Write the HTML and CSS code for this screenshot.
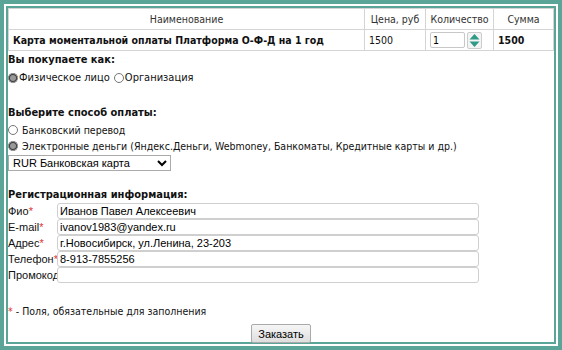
FILE: index.html
```html
<!DOCTYPE html>
<html lang="ru">
<head>
    <meta charset="UTF-8">
    <meta name="viewport" content="width=device-width, initial-scale=1.0">
    <link rel="stylesheet" href="styles.css">
    <title>Оформление заказа</title>
</head>
<body>
    <div class="frame">
        <div class="page">
            <table class="cart">
                <tr>
                    <th class="col-name">Наименование</th>
                    <th class="col-price">Цена, руб</th>
                    <th class="col-qty">Количество</th>
                    <th class="col-sum">Сумма</th>
                </tr>
                <tr>
                    <td class="item-name">Карта моментальной оплаты Платформа О-Ф-Д на 1 год</td>
                    <td>1500</td>
                    <td>
                        <div class="qty">
                            <input type="text" class="qty-input" value="1">
                            <span class="spinner">
                                <svg width="13" height="15" viewBox="0 0 13 15">
                                    <path d="M6.5 1 L11.5 6.5 L1.5 6.5 Z" fill="#2f9a86"/>
                                    <path d="M1.5 8.5 L11.5 8.5 L6.5 14 Z" fill="#2f9a86"/>
                                </svg>
                            </span>
                        </div>
                    </td>
                    <td class="item-sum">1500</td>
                </tr>
            </table>

            <form class="order">
                <h4 class="section-title">Вы покупаете как:</h4>
                <div class="buyer-type">
                    <label><input type="radio" name="buyer" checked>Физическое лицо</label>
                    <label><input type="radio" name="buyer">Организация</label>
                </div>

                <h4 class="section-title pay-title">Выберите способ оплаты:</h4>
                <label class="pay-option"><input type="radio" name="pay">Банковский перевод</label>
                <label class="pay-option"><input type="radio" name="pay" checked>Электронные деньги (Яндекс.Деньги, Webmoney, Банкоматы, Кредитные карты и др.)</label>
                <select class="pay-select">
                    <option>RUR Банковская карта</option>
                </select>

                <h4 class="section-title reg-title">Регистрационная информация:</h4>
                <div class="reg">
                    <div class="reg-row">
                        <span class="reg-label">Фио<i>*</i></span>
                        <input type="text" value="Иванов Павел Алексеевич">
                    </div>
                    <div class="reg-row">
                        <span class="reg-label">E-mail<i>*</i></span>
                        <input type="text" value="ivanov1983@yandex.ru">
                    </div>
                    <div class="reg-row">
                        <span class="reg-label">Адрес<i>*</i></span>
                        <input type="text" value="г.Новосибирск, ул.Ленина, 23-203">
                    </div>
                    <div class="reg-row">
                        <span class="reg-label">Телефон<i>*</i></span>
                        <input type="text" value="8-913-7855256">
                    </div>
                    <div class="reg-row">
                        <span class="reg-label">Промокод</span>
                        <input type="text" value="">
                    </div>
                </div>

                <p class="note"><i>*</i> - Поля, обязательные для заполнения</p>

                <div class="submit-row">
                    <button type="button">Заказать</button>
                </div>
            </form>
        </div>
    </div>
</body>
</html>
```

FILE: styles.css
```css
body {
    margin: 0;
    font-family: "DejaVu Sans Condensed", "DejaVu Sans", Verdana, sans-serif;
    font-stretch: semi-condensed;
    font-size: 11px;
    color: #111;
    background-color: #fff;
}

.frame {
    box-sizing: border-box;
    height: 350px;
    border: 4px solid #5aa597;
    padding: 2px;
    background-color: #fff;
}

.page {
    box-sizing: border-box;
    height: 100%;
    border: 2px solid #5aa597;
}

/* cart table */

.cart {
    width: 100%;
    border-collapse: collapse;
    font-size: 10.5px;
}

.cart th,
.cart td {
    border: 1px solid #d4d4d4;
    height: 20px;
    padding: 0 4px;
    white-space: nowrap;
}

.cart th {
    font-weight: normal;
    color: #333;
}

.col-price { width: 52px; }
.col-qty { width: 59px; }
.col-sum { width: 51px; }

.item-name,
.item-sum {
    font-weight: bold;
}

.qty {
    display: flex;
    align-items: center;
    gap: 2px;
}

.qty-input {
    box-sizing: border-box;
    width: 35px;
    height: 16px;
    padding: 0 2px;
    border: 1px solid #c8c8c8;
    border-radius: 2px;
    font-family: inherit;
    font-size: 10.5px;
}

.spinner {
    display: flex;
    align-items: center;
    justify-content: center;
    width: 15px;
    height: 17px;
    box-sizing: border-box;
    border: 1px solid #ccc;
    border-radius: 2px;
    background-color: #f4f4f4;
}

/* order form */

.order {
    margin: 0;
}

.section-title {
    margin: 0;
    font-size: 11px;
    font-weight: bold;
    line-height: 16px;
    padding-top: 1px;
}

.buyer-type {
    display: flex;
    gap: 4px;
    line-height: 16px;
    margin-top: 2px;
}

.buyer-type label,
.pay-option {
    display: flex;
    align-items: center;
}

input[type="radio"] {
    width: 10px;
    height: 10px;
    margin: 0 1px 0 0;
    accent-color: #999;
}

.pay-title {
    margin-top: 18px;
}

.pay-option {
    font-size: 10.5px;
    line-height: 16px;
}

.pay-option:first-of-type {
    margin-top: 1px;
}

.pay-option input[type="radio"] {
    margin-right: 4px;
}

.pay-select {
    display: block;
    width: 163px;
    height: 16px;
    margin-top: 1px;
    font-family: "Liberation Sans", Arial, sans-serif;
    font-size: 11px;
    padding: 0;
    border: 1px solid #aaa;
    background-color: #fff;
}

.reg-title {
    margin-top: 15px;
}

.reg-row {
    display: flex;
    align-items: center;
    height: 16px;
    font-family: "Liberation Sans", Arial, sans-serif;
    font-size: 11px;
}

.reg-label {
    width: 49px;
}

i {
    font-style: normal;
    color: #d33;
}

.reg-row input {
    box-sizing: border-box;
    width: 422px;
    height: 16px;
    padding: 0 2px;
    border: 1px solid #cfcfcf;
    border-radius: 3px;
    font-family: "Liberation Sans", Arial, sans-serif;
    font-size: 11px;
}

.note {
    margin: 21px 0 0;
    font-size: 10.5px;
    line-height: 14px;
}

.submit-row {
    display: flex;
    justify-content: center;
    margin-top: 6px;
}

.submit-row button {
    height: 19px;
    padding: 0 6px;
    font-family: "Liberation Sans", Arial, sans-serif;
    font-size: 11px;
    border: 1px solid #aaa;
    border-radius: 2px;
    background: linear-gradient(#f6f6f6, #dedede);
}
```
